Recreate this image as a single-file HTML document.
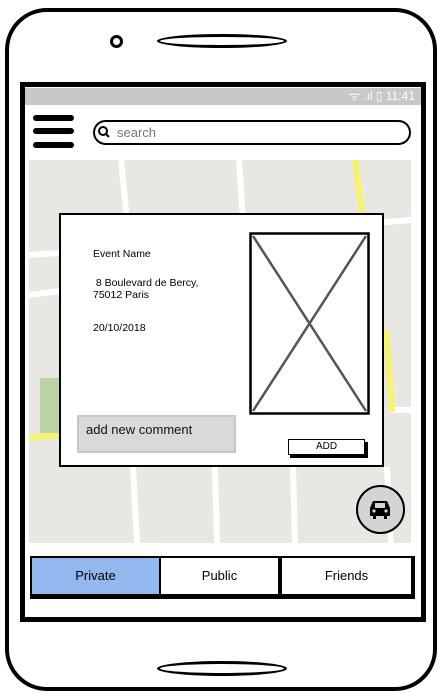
<!DOCTYPE html>
<html><head><meta charset="utf-8"><style>
*{margin:0;padding:0;box-sizing:border-box}
body{width:448px;height:699px;background:#fff;position:relative;overflow:hidden;font-family:"Liberation Sans",sans-serif}
.a{position:absolute}
</style></head><body>
<div class="a" style="left:5px;top:8px;width:432px;height:683px;border:4px solid #000;border-radius:42px"></div>
<div class="a" style="left:110px;top:35px;width:13px;height:13px;border:3.5px solid #000;border-radius:50%"></div>
<div class="a" style="left:157px;top:34px;width:130px;height:14px;border:3px solid #000;border-radius:50%"></div>
<div class="a" style="left:157px;top:661px;width:130px;height:15px;border:3px solid #000;border-radius:50%"></div>
<div class="a" style="left:20px;top:82px;width:406px;height:540px;border:5px solid #000"></div>
<div class="a" style="left:25px;top:88px;width:396px;height:17px;background:#c8c8c8;color:#fff;font-size:12px;text-align:right;padding-right:6px;line-height:17px">ᯤ .ıl ▯ 11:41</div>
<div class="a" style="left:33px;top:115px;width:41px;height:6px;background:#000;border-radius:3px"></div>
<div class="a" style="left:33px;top:128px;width:41px;height:6px;background:#000;border-radius:3px"></div>
<div class="a" style="left:33px;top:142px;width:41px;height:6px;background:#000;border-radius:3px"></div>
<div class="a" style="left:93px;top:120px;width:318px;height:25px;border:2px solid #000;border-radius:13px;font-size:13px;color:#777;line-height:21px;padding-left:22px">search</div>
<svg class="a" style="left:97px;top:125px" width="14" height="14"><circle cx="6" cy="6" r="4" fill="none" stroke="#000" stroke-width="2"/><line x1="9" y1="9" x2="12" y2="12" stroke="#000" stroke-width="2"/></svg>
<svg class="a" style="left:29px;top:160px" width="382" height="383">
<rect width="382" height="383" fill="#e9e7e1"/>
<g stroke="#fff" stroke-width="6" fill="none">
<line x1="92" y1="0" x2="98" y2="60"/><line x1="210" y1="0" x2="214" y2="60"/>
<line x1="0" y1="135" x2="40" y2="130"/><line x1="320" y1="65" x2="382" y2="60"/>
<line x1="0" y1="95" x2="30" y2="93"/>
<line x1="360" y1="250" x2="382" y2="250"/>
<line x1="104" y1="307" x2="108" y2="383"/><line x1="186" y1="307" x2="188" y2="383"/>
<line x1="264" y1="307" x2="266" y2="383"/><line x1="358" y1="307" x2="362" y2="383"/>
</g>
<g stroke="#f7f36a" stroke-width="6" fill="none">
<line x1="326" y1="0" x2="333" y2="55"/><line x1="357" y1="170" x2="363" y2="252"/>
<line x1="0" y1="278" x2="30" y2="275"/>
</g>
<rect x="11" y="218" width="19" height="55" fill="#bcd3aa"/>
</svg>
<div class="a" style="left:59px;top:213px;width:325px;height:254px;background:#fff;border:2px solid #000"></div>
<div class="a" style="left:93px;top:248px;font-size:10.5px;line-height:12px;color:#000">Event Name</div>
<div class="a" style="left:93px;top:277px;font-size:10.5px;line-height:12px;color:#000">&nbsp;8 Boulevard de Bercy,<br>75012 Paris</div>
<div class="a" style="left:93px;top:322px;font-size:10.5px;line-height:12px;color:#000">20/10/2018</div>
<svg class="a" style="left:249px;top:232px" width="121" height="183"><rect x="1.5" y="1.5" width="118" height="180" fill="#fff" stroke="#000" stroke-width="2.5"/><g stroke="#555" stroke-width="2.5"><line x1="4" y1="4" x2="117" y2="179"/><line x1="117" y1="4" x2="4" y2="179"/></g></svg>
<div class="a" style="left:77px;top:415px;width:159px;height:38px;background:#d9d9d9;border:2px solid #c8c8c8;font-size:13px;padding:5px 7px;color:#111">add new comment</div>
<div class="a" style="left:290px;top:442px;width:78px;height:16px;background:#000"></div>
<div class="a" style="left:288px;top:439px;width:77px;height:16px;background:#fff;border:1.5px solid #000;font-size:10px;text-align:center;line-height:13px">ADD</div>
<div class="a" style="left:356px;top:485px;width:49px;height:49px;border:2.5px solid #000;border-radius:50%;background:#d4d4d4"></div>
<svg class="a" style="left:367px;top:497px" width="26" height="24"><path d="M6 4h14l3 7v8h-3v3h-3v-3H9v3H6v-3H3v-8z" fill="#000"/><rect x="8" y="6" width="10" height="5" fill="#d4d4d4"/><circle cx="7" cy="14" r="1.6" fill="#d4d4d4"/><circle cx="19" cy="14" r="1.6" fill="#d4d4d4"/></svg>
<div class="a" style="left:30px;top:556px;width:385px;height:43px;background:#000"></div>
<div class="a" style="left:30px;top:556px;width:131px;height:40px;background:#93b8ef;border:2px solid #000;font-size:13px;text-align:center;line-height:36px">Private</div>
<div class="a" style="left:161px;top:556px;width:119px;height:40px;background:#fff;border:2px solid #000;border-left:none;font-size:13px;text-align:center;line-height:36px">Public</div>
<div class="a" style="left:280px;top:556px;width:133px;height:40px;background:#fff;border:2px solid #000;font-size:13px;text-align:center;line-height:36px">Friends</div>
</body></html>
